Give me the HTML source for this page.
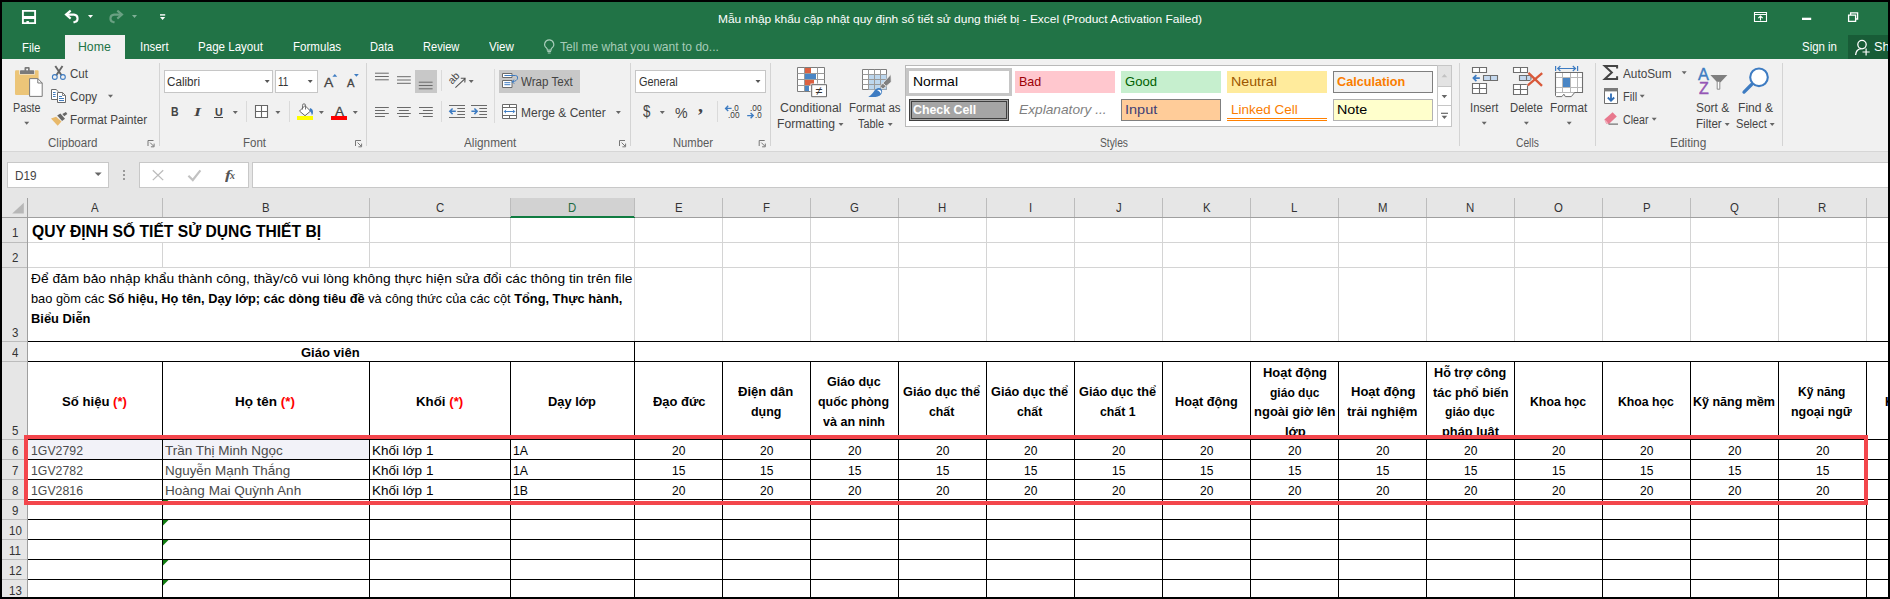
<!DOCTYPE html>
<html lang="vi"><head><meta charset="utf-8"><title>Excel</title><style>
html,body{margin:0;padding:0;background:#000;overflow:hidden}
#app{position:relative;width:1890px;height:599px;overflow:hidden;background:#000;font-family:"Liberation Sans",sans-serif}
.b{position:absolute}
.t{position:absolute;white-space:nowrap;line-height:1;transform-origin:0 0}
.rd{color:#f00}
#icons{position:absolute;left:0;top:0;pointer-events:none}
</style></head><body>
<div id="app">
<div class="b" style="left:2.00px;top:2.00px;width:1886.00px;height:595.00px;background:#fff;"></div>
<div id="titlebar" class="b" style="left:2px;top:2px;width:1886px;height:57px;background:#217346"></div>
<div class="b" style="left:65.00px;top:35.00px;width:60.00px;height:25.00px;background:#f1f1f1;"></div>
<div class="b" style="left:1848.00px;top:35.00px;width:40.00px;height:23.50px;background:#185c37;"></div>
<div class="b" style="left:2.00px;top:59.00px;width:1886.00px;height:92.00px;background:#f1f1f1;"></div>
<div class="b" style="left:2.00px;top:151.00px;width:1886.00px;height:1.00px;background:#d6d6d6;"></div>
<div class="b" style="left:2.00px;top:152.00px;width:1886.00px;height:46.00px;background:#e6e6e6;"></div>
<span class="t" style="left:718.30px;top:14px;font-size:11.80px;color:#fff;transform:scaleX(1.0139);">Mẫu nhập khẩu cập nhật quy định số tiết sử dụng thiết bị - Excel (Product Activation Failed)</span>
<span class="t" style="left:22.00px;top:42px;font-size:12.70px;color:#fff;transform:scaleX(0.8942);">File</span>
<span class="t" style="left:78.20px;top:41px;font-size:12.70px;color:#217346;transform:scaleX(0.9682);">Home</span>
<span class="t" style="left:140.20px;top:41px;font-size:12.70px;color:#fff;transform:scaleX(0.9004);">Insert</span>
<span class="t" style="left:198.00px;top:41px;font-size:12.70px;color:#fff;transform:scaleX(0.9114);">Page Layout</span>
<span class="t" style="left:292.60px;top:41px;font-size:12.70px;color:#fff;transform:scaleX(0.9106);">Formulas</span>
<span class="t" style="left:370.30px;top:41px;font-size:12.70px;color:#fff;transform:scaleX(0.8723);">Data</span>
<span class="t" style="left:423.30px;top:41px;font-size:12.70px;color:#fff;transform:scaleX(0.8741);">Review</span>
<span class="t" style="left:488.70px;top:41px;font-size:12.70px;color:#fff;transform:scaleX(0.9158);">View</span>
<span class="t" style="left:560.00px;top:41px;font-size:12.70px;color:#a6ccb8;transform:scaleX(0.9504);">Tell me what you want to do...</span>
<span class="t" style="left:1801.70px;top:41px;font-size:12.70px;color:#fff;transform:scaleX(0.9013);">Sign in</span>
<span class="t" style="left:1874.00px;top:41px;font-size:12.70px;color:#fff;">Share</span>
<span class="t" style="left:13.30px;top:102px;font-size:12.30px;color:#444444;transform:scaleX(0.8743);">Paste</span>
<span class="t" style="left:70.30px;top:68px;font-size:12.30px;color:#444444;transform:scaleX(0.9404);">Cut</span>
<span class="t" style="left:70.30px;top:91px;font-size:12.30px;color:#444444;transform:scaleX(0.9472);">Copy</span>
<span class="t" style="left:70.30px;top:114px;font-size:12.30px;color:#444444;transform:scaleX(0.9490);">Format Painter</span>
<span class="t" style="left:47.50px;top:137px;font-size:12.30px;color:#5a5a5a;transform:scaleX(0.9402);">Clipboard</span>
<div class="b" style="left:159.00px;top:63.00px;width:1.00px;height:83.00px;background:#d4d4d4;"></div>
<div class="b" style="left:164.00px;top:70.30px;width:109.30px;height:22.30px;background:#fff;border:1px solid #c6c6c6;box-sizing:border-box;"></div>
<div class="b" style="left:274.50px;top:70.30px;width:43.20px;height:22.30px;background:#fff;border:1px solid #c6c6c6;box-sizing:border-box;"></div>
<span class="t" style="left:167.40px;top:76px;font-size:12.30px;color:#333;transform:scaleX(0.9495);">Calibri</span>
<span class="t" style="left:278.00px;top:76px;font-size:12.30px;color:#333;transform:scaleX(0.8066);">11</span>
<span class="t" style="left:324.20px;top:76px;font-size:13.50px;color:#444444;transform:scaleX(1.0328);-webkit-text-stroke:0.3px #444;">A</span>
<span class="t" style="left:347.20px;top:78px;font-size:10.80px;color:#444444;transform:scaleX(1.0411);-webkit-text-stroke:0.3px #444;">A</span>
<span class="t" style="left:170.50px;top:106px;font-size:12.20px;color:#444444;font-weight:bold;transform:scaleX(0.8626);">B</span>
<span class="t" style="left:194.00px;top:106px;font-size:12.50px;color:#444444;font-style:italic;transform:scaleX(1.4398);font-family:'Liberation Serif',serif;font-weight:bold;">I</span>
<span class="t" style="left:214.60px;top:107px;font-size:11.80px;color:#444444;font-weight:bold;transform:scaleX(0.9036);">U</span>
<div class="b" style="left:214.00px;top:117.00px;width:9.00px;height:1.00px;background:#444444;"></div>
<div class="b" style="left:245.70px;top:101.30px;width:1.00px;height:21.20px;background:#dadada;"></div>
<div class="b" style="left:288.70px;top:101.30px;width:1.00px;height:21.20px;background:#dadada;"></div>
<div class="b" style="left:297.00px;top:116.00px;width:16.00px;height:4.00px;background:#ffff00;"></div>
<span class="t" style="left:335.00px;top:105px;font-size:13.70px;color:#444444;transform:scaleX(0.9849);-webkit-text-stroke:0.3px #444;">A</span>
<div class="b" style="left:331.00px;top:116.00px;width:16.00px;height:4.00px;background:#f00;"></div>
<span class="t" style="left:243.00px;top:137px;font-size:12.30px;color:#5a5a5a;transform:scaleX(0.9345);">Font</span>
<div class="b" style="left:366.00px;top:63.00px;width:1.00px;height:83.00px;background:#d4d4d4;"></div>
<div class="b" style="left:415.00px;top:70.00px;width:22.00px;height:23.00px;background:#c8c8c8;"></div>
<div class="b" style="left:440.80px;top:70.00px;width:1.00px;height:21.00px;background:#dadada;"></div>
<div class="b" style="left:493.50px;top:69.00px;width:1.00px;height:54.00px;background:#dadada;"></div>
<div class="b" style="left:499.00px;top:70.00px;width:81.00px;height:23.00px;background:#c8c8c8;"></div>
<span class="t" style="left:520.80px;top:76px;font-size:12.30px;color:#444444;transform:scaleX(0.9414);">Wrap Text</span>
<div class="b" style="left:440.80px;top:101.30px;width:1.00px;height:21.20px;background:#dadada;"></div>
<span class="t" style="left:520.80px;top:107px;font-size:12.30px;color:#444444;transform:scaleX(0.9755);">Merge &amp; Center</span>
<span class="t" style="left:464.00px;top:137px;font-size:12.30px;color:#5a5a5a;transform:scaleX(0.9562);">Alignment</span>
<div class="b" style="left:630.00px;top:63.00px;width:1.00px;height:83.00px;background:#d4d4d4;"></div>
<div class="b" style="left:635.30px;top:70.30px;width:130.30px;height:22.30px;background:#fff;border:1px solid #c6c6c6;box-sizing:border-box;"></div>
<span class="t" style="left:638.70px;top:76px;font-size:12.30px;color:#333;transform:scaleX(0.8867);">General</span>
<span class="t" style="left:642.70px;top:104px;font-size:15.80px;color:#444444;transform:scaleX(0.8421);">$</span>
<span class="t" style="left:674.50px;top:105px;font-size:15.00px;color:#444444;transform:scaleX(0.9447);">%</span>
<span class="t" style="left:698.40px;top:97px;font-size:18.00px;color:#444444;font-weight:bold;transform:scaleX(1.1199);font-family:'Liberation Serif',serif;">,</span>
<div class="b" style="left:717.00px;top:101.30px;width:1.00px;height:21.20px;background:#dadada;"></div>
<span class="t" style="left:732.30px;top:104px;font-size:8.80px;color:#3a3a3a;transform:scaleX(0.9129);">.0</span>
<span class="t" style="left:727.50px;top:111px;font-size:8.80px;color:#3a3a3a;transform:scaleX(0.9401);">.00</span>
<span class="t" style="left:749.70px;top:104px;font-size:8.80px;color:#3a3a3a;transform:scaleX(0.9401);">.00</span>
<span class="t" style="left:754.50px;top:111px;font-size:8.80px;color:#3a3a3a;transform:scaleX(0.9129);">.0</span>
<span class="t" style="left:672.50px;top:137px;font-size:12.30px;color:#5a5a5a;transform:scaleX(0.9143);">Number</span>
<div class="b" style="left:769.80px;top:63.00px;width:1.00px;height:83.00px;background:#d4d4d4;"></div>
<span class="t" style="left:780.00px;top:102px;font-size:12.30px;color:#444444;">Conditional</span>
<span class="t" style="left:777.00px;top:118px;font-size:12.30px;color:#444444;transform:scaleX(0.9866);">Formatting</span>
<span class="t" style="left:849.00px;top:102px;font-size:12.30px;color:#444444;transform:scaleX(0.9302);">Format as</span>
<span class="t" style="left:858.00px;top:118px;font-size:12.30px;color:#444444;transform:scaleX(0.8842);">Table</span>
<div class="b" style="left:905.00px;top:65.00px;width:533.00px;height:62.00px;background:#fff;border:1px solid #b9b9b9;box-sizing:border-box;"></div>
<div class="b" style="left:906.00px;top:68.00px;width:105.50px;height:27.50px;background:#c6c6c6;"></div>
<div class="b" style="left:908.70px;top:71.00px;width:100.30px;height:22.00px;background:#fff;"></div>
<span class="t" style="left:913.30px;top:75px;font-size:13.30px;color:#000;transform:scaleX(1.0498);">Normal</span>
<div class="b" style="left:1015.00px;top:71.00px;width:99.50px;height:22.00px;background:#ffc7ce;"></div>
<span class="t" style="left:1019.00px;top:75px;font-size:13.30px;color:#9c0006;transform:scaleX(0.9423);">Bad</span>
<div class="b" style="left:1120.80px;top:71.00px;width:100.00px;height:22.00px;background:#c6efce;"></div>
<span class="t" style="left:1125.00px;top:75px;font-size:13.30px;color:#006100;transform:scaleX(0.9835);">Good</span>
<div class="b" style="left:1227.00px;top:71.00px;width:99.70px;height:22.00px;background:#ffeb9c;"></div>
<span class="t" style="left:1231.30px;top:75px;font-size:13.30px;color:#9c5700;transform:scaleX(1.0705);">Neutral</span>
<div class="b" style="left:1333.00px;top:71.00px;width:100.00px;height:22.00px;background:#f2f2f2;border:1px solid #7f7f7f;box-sizing:border-box;"></div>
<span class="t" style="left:1336.80px;top:75px;font-size:13.30px;color:#fa7d00;font-weight:bold;transform:scaleX(0.9514);">Calculation</span>
<div class="b" style="left:909.00px;top:99.00px;width:99.70px;height:21.50px;background:#a5a5a5;border:3px double #3f3f3f;box-sizing:border-box;"></div>
<span class="t" style="left:913.30px;top:103px;font-size:13.30px;color:#fff;font-weight:bold;transform:scaleX(0.9293);">Check Cell</span>
<span class="t" style="left:1019.00px;top:103px;font-size:13.30px;color:#7f7f7f;font-style:italic;transform:scaleX(1.0316);">Explanatory ...</span>
<div class="b" style="left:1120.80px;top:99.00px;width:100.00px;height:21.50px;background:#ffcc99;border:1px solid #7f7f7f;box-sizing:border-box;"></div>
<span class="t" style="left:1125.00px;top:103px;font-size:13.30px;color:#3f3f76;transform:scaleX(1.0919);">Input</span>
<span class="t" style="left:1231.30px;top:103px;font-size:13.30px;color:#fa7d00;transform:scaleX(1.0137);">Linked Cell</span>
<div class="b" style="left:1227.00px;top:118.00px;width:99.70px;height:2.60px;border-top:1px solid #ff8001;border-bottom:1px solid #ff8001;box-sizing:border-box;"></div>
<div class="b" style="left:1333.00px;top:99.00px;width:100.00px;height:21.50px;background:#ffffcc;border:1px solid #b2b2b2;box-sizing:border-box;"></div>
<span class="t" style="left:1336.80px;top:103px;font-size:13.30px;color:#000;transform:scaleX(1.0750);">Note</span>
<div class="b" style="left:1437.00px;top:65.00px;width:14.50px;height:21.50px;background:#e3e3e3;border:1px solid #c6c6c6;box-sizing:border-box;"></div>
<div class="b" style="left:1437.00px;top:86.50px;width:14.50px;height:19.50px;background:#fff;border:1px solid #c6c6c6;box-sizing:border-box;border-top:none;"></div>
<div class="b" style="left:1437.00px;top:106.00px;width:14.50px;height:21.00px;background:#fff;border:1px solid #c6c6c6;box-sizing:border-box;border-top:none;"></div>
<span class="t" style="left:1100.00px;top:137px;font-size:12.30px;color:#5a5a5a;transform:scaleX(0.8359);">Styles</span>
<div class="b" style="left:1458.70px;top:63.00px;width:1.00px;height:83.00px;background:#d4d4d4;"></div>
<span class="t" style="left:1470.00px;top:102px;font-size:12.30px;color:#444444;transform:scaleX(0.9200);">Insert</span>
<span class="t" style="left:1510.30px;top:102px;font-size:12.30px;color:#444444;transform:scaleX(0.9197);">Delete</span>
<span class="t" style="left:1550.30px;top:102px;font-size:12.30px;color:#444444;transform:scaleX(0.9549);">Format</span>
<span class="t" style="left:1515.50px;top:137px;font-size:12.30px;color:#5a5a5a;transform:scaleX(0.8340);">Cells</span>
<div class="b" style="left:1595.00px;top:63.00px;width:1.00px;height:83.00px;background:#d4d4d4;"></div>
<span class="t" style="left:1622.50px;top:68px;font-size:12.30px;color:#444444;transform:scaleX(0.9586);">AutoSum</span>
<span class="t" style="left:1622.50px;top:91px;font-size:12.30px;color:#444444;transform:scaleX(0.9038);">Fill</span>
<span class="t" style="left:1622.50px;top:114px;font-size:12.30px;color:#444444;transform:scaleX(0.8675);">Clear</span>
<span class="t" style="left:1698.20px;top:66px;font-size:16.50px;color:#3e7cc2;transform:scaleX(0.9904);-webkit-text-stroke:0.4px #3e7cc2;">A</span>
<span class="t" style="left:1698.90px;top:80px;font-size:16.30px;color:#9556b5;transform:scaleX(0.9842);-webkit-text-stroke:0.4px #9556b5;">Z</span>
<span class="t" style="left:1695.80px;top:102px;font-size:12.30px;color:#444444;transform:scaleX(0.9713);">Sort &amp;</span>
<span class="t" style="left:1696.00px;top:118px;font-size:12.30px;color:#444444;transform:scaleX(0.9402);">Filter</span>
<span class="t" style="left:1738.00px;top:102px;font-size:12.30px;color:#444444;transform:scaleX(0.9845);">Find &amp;</span>
<span class="t" style="left:1735.80px;top:118px;font-size:12.30px;color:#444444;transform:scaleX(0.9039);">Select</span>
<span class="t" style="left:1670.00px;top:137px;font-size:12.30px;color:#5a5a5a;transform:scaleX(0.9652);">Editing</span>
<div class="b" style="left:1781.50px;top:63.00px;width:1.00px;height:83.00px;background:#d4d4d4;"></div>
<div class="b" style="left:7.00px;top:162.00px;width:102.00px;height:26.00px;background:#fff;border:1px solid #c8c8c8;box-sizing:border-box;"></div>
<span class="t" style="left:14.70px;top:170px;font-size:12.30px;color:#444;transform:scaleX(0.9572);">D19</span>
<div class="b" style="left:139.00px;top:162.00px;width:110.00px;height:26.00px;background:#fff;border:1px solid #c8c8c8;box-sizing:border-box;"></div>
<span class="t" style="left:225.00px;top:168px;font-size:13.50px;color:#555;font-weight:bold;font-style:italic;transform:scaleX(1.3345);font-family:'Liberation Serif',serif;">f</span>
<span class="t" style="left:230.30px;top:172px;font-size:9.50px;color:#555;font-weight:bold;font-style:italic;transform:scaleX(1.0410);font-family:'Liberation Serif',serif;">x</span>
<div class="b" style="left:252.00px;top:162.00px;width:1640.00px;height:26.00px;background:#fff;border:1px solid #c8c8c8;box-sizing:border-box;"></div>
<div class="b" style="left:2.00px;top:198.00px;width:1886.00px;height:19.00px;background:#e6e6e6;"></div>
<div class="b" style="left:2.00px;top:217.00px;width:25.00px;height:380.00px;background:#e6e6e6;"></div>
<div class="b" style="left:28.00px;top:218.00px;width:1860.00px;height:379.00px;background:#fff;"></div>
<div class="b" style="left:510.00px;top:198.00px;width:125.00px;height:18.00px;background:#d2d2d2;"></div>
<div class="b" style="left:510.00px;top:216.00px;width:125.00px;height:2.00px;background:#107c41;"></div>
<div class="b" style="left:2.00px;top:217.00px;width:508.00px;height:1.00px;background:#9f9f9f;"></div>
<div class="b" style="left:635.00px;top:217.00px;width:1253.00px;height:1.00px;background:#9f9f9f;"></div>
<div class="b" style="left:27.00px;top:198.00px;width:1.00px;height:19.00px;background:#9f9f9f;"></div>
<div class="b" style="left:162.00px;top:198.00px;width:1.00px;height:19.00px;background:#bcbcbc;"></div>
<div class="b" style="left:369.00px;top:198.00px;width:1.00px;height:19.00px;background:#bcbcbc;"></div>
<div class="b" style="left:510.00px;top:198.00px;width:1.00px;height:19.00px;background:#bcbcbc;"></div>
<div class="b" style="left:634.00px;top:198.00px;width:1.00px;height:19.00px;background:#bcbcbc;"></div>
<div class="b" style="left:722.00px;top:198.00px;width:1.00px;height:19.00px;background:#bcbcbc;"></div>
<div class="b" style="left:810.00px;top:198.00px;width:1.00px;height:19.00px;background:#bcbcbc;"></div>
<div class="b" style="left:898.00px;top:198.00px;width:1.00px;height:19.00px;background:#bcbcbc;"></div>
<div class="b" style="left:986.00px;top:198.00px;width:1.00px;height:19.00px;background:#bcbcbc;"></div>
<div class="b" style="left:1074.00px;top:198.00px;width:1.00px;height:19.00px;background:#bcbcbc;"></div>
<div class="b" style="left:1162.00px;top:198.00px;width:1.00px;height:19.00px;background:#bcbcbc;"></div>
<div class="b" style="left:1250.00px;top:198.00px;width:1.00px;height:19.00px;background:#bcbcbc;"></div>
<div class="b" style="left:1338.00px;top:198.00px;width:1.00px;height:19.00px;background:#bcbcbc;"></div>
<div class="b" style="left:1426.00px;top:198.00px;width:1.00px;height:19.00px;background:#bcbcbc;"></div>
<div class="b" style="left:1514.00px;top:198.00px;width:1.00px;height:19.00px;background:#bcbcbc;"></div>
<div class="b" style="left:1602.00px;top:198.00px;width:1.00px;height:19.00px;background:#bcbcbc;"></div>
<div class="b" style="left:1690.00px;top:198.00px;width:1.00px;height:19.00px;background:#bcbcbc;"></div>
<div class="b" style="left:1778.00px;top:198.00px;width:1.00px;height:19.00px;background:#bcbcbc;"></div>
<div class="b" style="left:1866.00px;top:198.00px;width:1.00px;height:19.00px;background:#bcbcbc;"></div>
<div class="b" style="left:27.00px;top:217.00px;width:1.00px;height:380.00px;background:#9f9f9f;"></div>
<span class="t" style="left:91.20px;top:202px;font-size:12.00px;color:#333;transform:scaleX(0.9500);">A</span>
<span class="t" style="left:262.20px;top:202px;font-size:12.00px;color:#333;transform:scaleX(0.9500);">B</span>
<span class="t" style="left:435.88px;top:202px;font-size:12.00px;color:#333;transform:scaleX(0.9500);">C</span>
<span class="t" style="left:568.38px;top:202px;font-size:12.00px;color:#1e6b41;transform:scaleX(0.9500);">D</span>
<span class="t" style="left:674.70px;top:202px;font-size:12.00px;color:#333;transform:scaleX(0.9500);">E</span>
<span class="t" style="left:763.02px;top:202px;font-size:12.00px;color:#333;transform:scaleX(0.9500);">F</span>
<span class="t" style="left:850.07px;top:202px;font-size:12.00px;color:#333;transform:scaleX(0.9500);">G</span>
<span class="t" style="left:938.38px;top:202px;font-size:12.00px;color:#333;transform:scaleX(0.9500);">H</span>
<span class="t" style="left:1028.92px;top:202px;font-size:12.00px;color:#333;transform:scaleX(0.9500);">I</span>
<span class="t" style="left:1115.65px;top:202px;font-size:12.00px;color:#333;transform:scaleX(0.9500);">J</span>
<span class="t" style="left:1202.70px;top:202px;font-size:12.00px;color:#333;transform:scaleX(0.9500);">K</span>
<span class="t" style="left:1291.33px;top:202px;font-size:12.00px;color:#333;transform:scaleX(0.9500);">L</span>
<span class="t" style="left:1377.75px;top:202px;font-size:12.00px;color:#333;transform:scaleX(0.9500);">M</span>
<span class="t" style="left:1466.38px;top:202px;font-size:12.00px;color:#333;transform:scaleX(0.9500);">N</span>
<span class="t" style="left:1554.07px;top:202px;font-size:12.00px;color:#333;transform:scaleX(0.9500);">O</span>
<span class="t" style="left:1642.70px;top:202px;font-size:12.00px;color:#333;transform:scaleX(0.9500);">P</span>
<span class="t" style="left:1730.07px;top:202px;font-size:12.00px;color:#333;transform:scaleX(0.9500);">Q</span>
<span class="t" style="left:1818.38px;top:202px;font-size:12.00px;color:#333;transform:scaleX(0.9500);">R</span>
<span class="t" style="left:11.79px;top:227px;font-size:12.40px;color:#333;transform:scaleX(0.9300);">1</span>
<div class="b" style="left:2.00px;top:242.00px;width:25.00px;height:1.00px;background:#bcbcbc;"></div>
<span class="t" style="left:11.79px;top:252px;font-size:12.40px;color:#333;transform:scaleX(0.9300);">2</span>
<div class="b" style="left:2.00px;top:267.00px;width:25.00px;height:1.00px;background:#bcbcbc;"></div>
<span class="t" style="left:11.79px;top:327px;font-size:12.40px;color:#333;transform:scaleX(0.9300);">3</span>
<div class="b" style="left:2.00px;top:341.00px;width:25.00px;height:1.00px;background:#bcbcbc;"></div>
<span class="t" style="left:11.79px;top:347px;font-size:12.40px;color:#333;transform:scaleX(0.9300);">4</span>
<div class="b" style="left:2.00px;top:361.00px;width:25.00px;height:1.00px;background:#bcbcbc;"></div>
<span class="t" style="left:11.79px;top:425px;font-size:12.40px;color:#333;transform:scaleX(0.9300);">5</span>
<div class="b" style="left:2.00px;top:439.00px;width:25.00px;height:1.00px;background:#bcbcbc;"></div>
<span class="t" style="left:11.79px;top:445px;font-size:12.40px;color:#333;transform:scaleX(0.9300);">6</span>
<div class="b" style="left:2.00px;top:459.00px;width:25.00px;height:1.00px;background:#bcbcbc;"></div>
<span class="t" style="left:11.79px;top:465px;font-size:12.40px;color:#333;transform:scaleX(0.9300);">7</span>
<div class="b" style="left:2.00px;top:479.00px;width:25.00px;height:1.00px;background:#bcbcbc;"></div>
<span class="t" style="left:11.79px;top:485px;font-size:12.40px;color:#333;transform:scaleX(0.9300);">8</span>
<div class="b" style="left:2.00px;top:499.00px;width:25.00px;height:1.00px;background:#bcbcbc;"></div>
<span class="t" style="left:11.79px;top:505px;font-size:12.40px;color:#333;transform:scaleX(0.9300);">9</span>
<div class="b" style="left:2.00px;top:519.00px;width:25.00px;height:1.00px;background:#bcbcbc;"></div>
<span class="t" style="left:8.59px;top:525px;font-size:12.40px;color:#333;transform:scaleX(0.9300);">10</span>
<div class="b" style="left:2.00px;top:539.00px;width:25.00px;height:1.00px;background:#bcbcbc;"></div>
<span class="t" style="left:9.01px;top:545px;font-size:12.40px;color:#333;transform:scaleX(0.9300);">11</span>
<div class="b" style="left:2.00px;top:559.00px;width:25.00px;height:1.00px;background:#bcbcbc;"></div>
<span class="t" style="left:8.59px;top:565px;font-size:12.40px;color:#333;transform:scaleX(0.9300);">12</span>
<div class="b" style="left:2.00px;top:579.00px;width:25.00px;height:1.00px;background:#bcbcbc;"></div>
<span class="t" style="left:8.59px;top:585px;font-size:12.40px;color:#333;transform:scaleX(0.9300);">13</span>
<div class="b" style="left:2.00px;top:599.00px;width:25.00px;height:1.00px;background:#bcbcbc;"></div>
<div class="b" style="left:28.00px;top:242.00px;width:1860.00px;height:1.00px;background:#d4d4d4;"></div>
<div class="b" style="left:28.00px;top:267.00px;width:1860.00px;height:1.00px;background:#d4d4d4;"></div>
<div class="b" style="left:162.00px;top:243.00px;width:1.00px;height:24.00px;background:#d4d4d4;"></div>
<div class="b" style="left:369.00px;top:218.00px;width:1.00px;height:49.00px;background:#d4d4d4;"></div>
<div class="b" style="left:510.00px;top:218.00px;width:1.00px;height:49.00px;background:#d4d4d4;"></div>
<div class="b" style="left:634.00px;top:218.00px;width:1.00px;height:123.00px;background:#d4d4d4;"></div>
<div class="b" style="left:722.00px;top:218.00px;width:1.00px;height:123.00px;background:#d4d4d4;"></div>
<div class="b" style="left:810.00px;top:218.00px;width:1.00px;height:123.00px;background:#d4d4d4;"></div>
<div class="b" style="left:898.00px;top:218.00px;width:1.00px;height:123.00px;background:#d4d4d4;"></div>
<div class="b" style="left:986.00px;top:218.00px;width:1.00px;height:123.00px;background:#d4d4d4;"></div>
<div class="b" style="left:1074.00px;top:218.00px;width:1.00px;height:123.00px;background:#d4d4d4;"></div>
<div class="b" style="left:1162.00px;top:218.00px;width:1.00px;height:123.00px;background:#d4d4d4;"></div>
<div class="b" style="left:1250.00px;top:218.00px;width:1.00px;height:123.00px;background:#d4d4d4;"></div>
<div class="b" style="left:1338.00px;top:218.00px;width:1.00px;height:123.00px;background:#d4d4d4;"></div>
<div class="b" style="left:1426.00px;top:218.00px;width:1.00px;height:123.00px;background:#d4d4d4;"></div>
<div class="b" style="left:1514.00px;top:218.00px;width:1.00px;height:123.00px;background:#d4d4d4;"></div>
<div class="b" style="left:1602.00px;top:218.00px;width:1.00px;height:123.00px;background:#d4d4d4;"></div>
<div class="b" style="left:1690.00px;top:218.00px;width:1.00px;height:123.00px;background:#d4d4d4;"></div>
<div class="b" style="left:1778.00px;top:218.00px;width:1.00px;height:123.00px;background:#d4d4d4;"></div>
<div class="b" style="left:1866.00px;top:218.00px;width:1.00px;height:123.00px;background:#d4d4d4;"></div>
<div class="b" style="left:28.00px;top:341.00px;width:1860.00px;height:1.00px;background:#000;"></div>
<div class="b" style="left:28.00px;top:361.00px;width:1860.00px;height:1.00px;background:#000;"></div>
<div class="b" style="left:28.00px;top:439.00px;width:1860.00px;height:1.00px;background:#000;"></div>
<div class="b" style="left:28.00px;top:459.00px;width:1860.00px;height:1.00px;background:#000;"></div>
<div class="b" style="left:28.00px;top:479.00px;width:1860.00px;height:1.00px;background:#000;"></div>
<div class="b" style="left:28.00px;top:499.00px;width:1860.00px;height:1.00px;background:#000;"></div>
<div class="b" style="left:28.00px;top:519.00px;width:1860.00px;height:1.00px;background:#000;"></div>
<div class="b" style="left:28.00px;top:539.00px;width:1860.00px;height:1.00px;background:#000;"></div>
<div class="b" style="left:28.00px;top:559.00px;width:1860.00px;height:1.00px;background:#000;"></div>
<div class="b" style="left:28.00px;top:579.00px;width:1860.00px;height:1.00px;background:#000;"></div>
<div class="b" style="left:162.00px;top:361.00px;width:1.00px;height:236.00px;background:#000;"></div>
<div class="b" style="left:369.00px;top:361.00px;width:1.00px;height:236.00px;background:#000;"></div>
<div class="b" style="left:510.00px;top:361.00px;width:1.00px;height:236.00px;background:#000;"></div>
<div class="b" style="left:634.00px;top:341.00px;width:1.00px;height:256.00px;background:#000;"></div>
<div class="b" style="left:722.00px;top:361.00px;width:1.00px;height:236.00px;background:#000;"></div>
<div class="b" style="left:810.00px;top:361.00px;width:1.00px;height:236.00px;background:#000;"></div>
<div class="b" style="left:898.00px;top:361.00px;width:1.00px;height:236.00px;background:#000;"></div>
<div class="b" style="left:986.00px;top:361.00px;width:1.00px;height:236.00px;background:#000;"></div>
<div class="b" style="left:1074.00px;top:361.00px;width:1.00px;height:236.00px;background:#000;"></div>
<div class="b" style="left:1162.00px;top:361.00px;width:1.00px;height:236.00px;background:#000;"></div>
<div class="b" style="left:1250.00px;top:361.00px;width:1.00px;height:236.00px;background:#000;"></div>
<div class="b" style="left:1338.00px;top:361.00px;width:1.00px;height:236.00px;background:#000;"></div>
<div class="b" style="left:1426.00px;top:361.00px;width:1.00px;height:236.00px;background:#000;"></div>
<div class="b" style="left:1514.00px;top:361.00px;width:1.00px;height:236.00px;background:#000;"></div>
<div class="b" style="left:1602.00px;top:361.00px;width:1.00px;height:236.00px;background:#000;"></div>
<div class="b" style="left:1690.00px;top:361.00px;width:1.00px;height:236.00px;background:#000;"></div>
<div class="b" style="left:1778.00px;top:361.00px;width:1.00px;height:236.00px;background:#000;"></div>
<div class="b" style="left:1866.00px;top:361.00px;width:1.00px;height:236.00px;background:#000;"></div>
<div class="b" style="left:28.00px;top:440.00px;width:134.00px;height:19.00px;background:#f2f2f8;"></div>
<div class="b" style="left:163.00px;top:440.00px;width:206.00px;height:19.00px;background:#f2f2f8;"></div>
<span class="t" style="left:31.70px;top:223px;font-size:17.20px;color:#000;font-weight:bold;transform:scaleX(0.9102);">QUY ĐỊNH SỐ TIẾT SỬ DỤNG THIẾT BỊ</span>
<span class="t" style="left:30.50px;top:272px;font-size:13.30px;color:#000;transform:scaleX(1.0349);">Để đảm bảo nhập khẩu thành công, thầy/cô vui lòng không thực hiện sửa đổi các thông tin trên file</span>
<span class="t" style="left:30.50px;top:292px;font-size:13.30px;color:#000;transform:scaleX(0.9632);">bao gồm các <b>Số hiệu, Họ tên, Dạy lớp; các dòng tiêu đề</b> và công thức của các cột <b>Tổng, Thực hành,</b></span>
<span class="t" style="left:30.50px;top:312px;font-size:13.30px;color:#000;transform:scaleX(0.9700);"><b>Biểu Diễn</b></span>
<span class="t" style="left:301.40px;top:346px;font-size:13.30px;color:#000;font-weight:bold;transform:scaleX(0.9788);">Giáo viên</span>
<span class="t" style="left:62.00px;top:395px;font-size:13.30px;color:#000;font-weight:bold;transform:scaleX(0.9884);">Số hiệu <span class="rd">(*)</span></span>
<span class="t" style="left:235.00px;top:395px;font-size:13.30px;color:#000;font-weight:bold;transform:scaleX(1.0151);">Họ tên <span class="rd">(*)</span></span>
<span class="t" style="left:416.00px;top:395px;font-size:13.30px;color:#000;font-weight:bold;">Khối <span class="rd">(*)</span></span>
<span class="t" style="left:547.80px;top:395px;font-size:13.30px;color:#000;font-weight:bold;transform:scaleX(0.9682);">Dạy lớp</span>
<div class="b" style="left:635px;top:362px;width:87px;height:73px;overflow:hidden">
<span class="t" style="left:17.50px;top:33px;font-size:13.30px;color:#000;font-weight:bold;transform:scaleX(0.9727)">Đạo đức</span>
</div>
<div class="b" style="left:723px;top:362px;width:87px;height:73px;overflow:hidden">
<span class="t" style="left:15.00px;top:23px;font-size:13.30px;color:#000;font-weight:bold;transform:scaleX(0.9846)">Điện dân</span>
<span class="t" style="left:28.30px;top:43px;font-size:13.30px;color:#000;font-weight:bold;transform:scaleX(0.9355)">dụng</span>
</div>
<div class="b" style="left:811px;top:362px;width:87px;height:73px;overflow:hidden">
<span class="t" style="left:16.00px;top:13px;font-size:13.30px;color:#000;font-weight:bold;transform:scaleX(0.9455)">Giáo dục</span>
<span class="t" style="left:7.00px;top:33px;font-size:13.30px;color:#000;font-weight:bold;transform:scaleX(0.9331)">quốc phòng</span>
<span class="t" style="left:12.00px;top:53px;font-size:13.30px;color:#000;font-weight:bold;transform:scaleX(0.9426)">và an ninh</span>
</div>
<div class="b" style="left:899px;top:362px;width:87px;height:73px;overflow:hidden">
<span class="t" style="left:4.20px;top:23px;font-size:13.30px;color:#000;font-weight:bold;transform:scaleX(0.9560)">Giáo dục thể</span>
<span class="t" style="left:30.00px;top:43px;font-size:13.30px;color:#000;font-weight:bold;transform:scaleX(0.9251)">chất</span>
</div>
<div class="b" style="left:987px;top:362px;width:87px;height:73px;overflow:hidden">
<span class="t" style="left:4.20px;top:23px;font-size:13.30px;color:#000;font-weight:bold;transform:scaleX(0.9560)">Giáo dục thể</span>
<span class="t" style="left:30.00px;top:43px;font-size:13.30px;color:#000;font-weight:bold;transform:scaleX(0.9251)">chất</span>
</div>
<div class="b" style="left:1075px;top:362px;width:87px;height:73px;overflow:hidden">
<span class="t" style="left:4.20px;top:23px;font-size:13.30px;color:#000;font-weight:bold;transform:scaleX(0.9560)">Giáo dục thể</span>
<span class="t" style="left:25.00px;top:43px;font-size:13.30px;color:#000;font-weight:bold;transform:scaleX(0.9235)">chất 1</span>
</div>
<div class="b" style="left:1163px;top:362px;width:87px;height:73px;overflow:hidden">
<span class="t" style="left:11.80px;top:33px;font-size:13.30px;color:#000;font-weight:bold;transform:scaleX(0.9536)">Hoạt động</span>
</div>
<div class="b" style="left:1251px;top:362px;width:87px;height:73px;overflow:hidden">
<span class="t" style="left:12.00px;top:4px;font-size:13.30px;color:#000;font-weight:bold;transform:scaleX(0.9734)">Hoạt động</span>
<span class="t" style="left:18.50px;top:24px;font-size:13.30px;color:#000;font-weight:bold;transform:scaleX(0.9052)">giáo dục</span>
<span class="t" style="left:2.50px;top:43px;font-size:13.30px;color:#000;font-weight:bold;transform:scaleX(0.9778)">ngoài giờ lên</span>
<span class="t" style="left:33.60px;top:63px;font-size:13.30px;color:#000;font-weight:bold;transform:scaleX(0.9777)">lớp</span>
</div>
<div class="b" style="left:1339px;top:362px;width:87px;height:73px;overflow:hidden">
<span class="t" style="left:11.80px;top:23px;font-size:13.30px;color:#000;font-weight:bold;transform:scaleX(0.9795)">Hoạt động</span>
<span class="t" style="left:8.30px;top:43px;font-size:13.30px;color:#000;font-weight:bold;transform:scaleX(0.9835)">trải nghiệm</span>
</div>
<div class="b" style="left:1427px;top:362px;width:87px;height:73px;overflow:hidden">
<span class="t" style="left:6.80px;top:4px;font-size:13.30px;color:#000;font-weight:bold;transform:scaleX(0.9506)">Hỗ trợ công</span>
<span class="t" style="left:5.50px;top:24px;font-size:13.30px;color:#000;font-weight:bold;transform:scaleX(0.9639)">tác phổ biến</span>
<span class="t" style="left:17.60px;top:43px;font-size:13.30px;color:#000;font-weight:bold;transform:scaleX(0.9089)">giáo dục</span>
<span class="t" style="left:14.60px;top:63px;font-size:13.30px;color:#000;font-weight:bold;transform:scaleX(0.9643)">pháp luật</span>
</div>
<div class="b" style="left:1515px;top:362px;width:87px;height:73px;overflow:hidden">
<span class="t" style="left:15.00px;top:33px;font-size:13.30px;color:#000;font-weight:bold;transform:scaleX(0.9242)">Khoa học</span>
</div>
<div class="b" style="left:1603px;top:362px;width:87px;height:73px;overflow:hidden">
<span class="t" style="left:15.30px;top:33px;font-size:13.30px;color:#000;font-weight:bold;transform:scaleX(0.9226)">Khoa học</span>
</div>
<div class="b" style="left:1691px;top:362px;width:87px;height:73px;overflow:hidden">
<span class="t" style="left:2.00px;top:33px;font-size:13.30px;color:#000;font-weight:bold;transform:scaleX(0.9403)">Kỹ năng mềm</span>
</div>
<div class="b" style="left:1779px;top:362px;width:87px;height:73px;overflow:hidden">
<span class="t" style="left:19.00px;top:23px;font-size:13.30px;color:#000;font-weight:bold;transform:scaleX(0.9015)">Kỹ năng</span>
<span class="t" style="left:11.80px;top:43px;font-size:13.30px;color:#000;font-weight:bold;transform:scaleX(0.9363)">ngoại ngữ</span>
</div>
<span class="t" style="left:1885.00px;top:395px;font-size:13.30px;color:#000;font-weight:bold;transform:scaleX(0.9370);">K</span>
<span class="t" style="left:30.50px;top:444px;font-size:13.30px;color:#4a4a4a;transform:scaleX(0.9252);">1GV2792</span>
<span class="t" style="left:165.00px;top:444px;font-size:13.30px;color:#4a4a4a;transform:scaleX(1.0150);">Trần Thị Minh Ngọc</span>
<span class="t" style="left:372.30px;top:444px;font-size:13.30px;color:#000;transform:scaleX(1.0152);">Khối lớp 1</span>
<span class="t" style="left:513.00px;top:444px;font-size:13.30px;color:#000;transform:scaleX(0.9220);">1A</span>
<span class="t" style="left:671.80px;top:444px;font-size:13.30px;color:#000;transform:scaleX(0.9058);">20</span>
<span class="t" style="left:759.80px;top:444px;font-size:13.30px;color:#000;transform:scaleX(0.9058);">20</span>
<span class="t" style="left:847.80px;top:444px;font-size:13.30px;color:#000;transform:scaleX(0.9058);">20</span>
<span class="t" style="left:935.80px;top:444px;font-size:13.30px;color:#000;transform:scaleX(0.9058);">20</span>
<span class="t" style="left:1023.80px;top:444px;font-size:13.30px;color:#000;transform:scaleX(0.9058);">20</span>
<span class="t" style="left:1111.80px;top:444px;font-size:13.30px;color:#000;transform:scaleX(0.9058);">20</span>
<span class="t" style="left:1199.80px;top:444px;font-size:13.30px;color:#000;transform:scaleX(0.9058);">20</span>
<span class="t" style="left:1287.80px;top:444px;font-size:13.30px;color:#000;transform:scaleX(0.9058);">20</span>
<span class="t" style="left:1375.80px;top:444px;font-size:13.30px;color:#000;transform:scaleX(0.9058);">20</span>
<span class="t" style="left:1463.80px;top:444px;font-size:13.30px;color:#000;transform:scaleX(0.9058);">20</span>
<span class="t" style="left:1551.80px;top:444px;font-size:13.30px;color:#000;transform:scaleX(0.9058);">20</span>
<span class="t" style="left:1639.80px;top:444px;font-size:13.30px;color:#000;transform:scaleX(0.9058);">20</span>
<span class="t" style="left:1727.80px;top:444px;font-size:13.30px;color:#000;transform:scaleX(0.9058);">20</span>
<span class="t" style="left:1815.80px;top:444px;font-size:13.30px;color:#000;transform:scaleX(0.9058);">20</span>
<span class="t" style="left:30.50px;top:464px;font-size:13.30px;color:#4a4a4a;transform:scaleX(0.9252);">1GV2782</span>
<span class="t" style="left:165.00px;top:464px;font-size:13.30px;color:#4a4a4a;transform:scaleX(1.0107);">Nguyễn Mạnh Thắng</span>
<span class="t" style="left:372.30px;top:464px;font-size:13.30px;color:#000;transform:scaleX(1.0152);">Khối lớp 1</span>
<span class="t" style="left:513.00px;top:464px;font-size:13.30px;color:#000;transform:scaleX(0.9220);">1A</span>
<span class="t" style="left:671.80px;top:464px;font-size:13.30px;color:#000;transform:scaleX(0.9058);">15</span>
<span class="t" style="left:759.80px;top:464px;font-size:13.30px;color:#000;transform:scaleX(0.9058);">15</span>
<span class="t" style="left:847.80px;top:464px;font-size:13.30px;color:#000;transform:scaleX(0.9058);">15</span>
<span class="t" style="left:935.80px;top:464px;font-size:13.30px;color:#000;transform:scaleX(0.9058);">15</span>
<span class="t" style="left:1023.80px;top:464px;font-size:13.30px;color:#000;transform:scaleX(0.9058);">15</span>
<span class="t" style="left:1111.80px;top:464px;font-size:13.30px;color:#000;transform:scaleX(0.9058);">15</span>
<span class="t" style="left:1199.80px;top:464px;font-size:13.30px;color:#000;transform:scaleX(0.9058);">15</span>
<span class="t" style="left:1287.80px;top:464px;font-size:13.30px;color:#000;transform:scaleX(0.9058);">15</span>
<span class="t" style="left:1375.80px;top:464px;font-size:13.30px;color:#000;transform:scaleX(0.9058);">15</span>
<span class="t" style="left:1463.80px;top:464px;font-size:13.30px;color:#000;transform:scaleX(0.9058);">15</span>
<span class="t" style="left:1551.80px;top:464px;font-size:13.30px;color:#000;transform:scaleX(0.9058);">15</span>
<span class="t" style="left:1639.80px;top:464px;font-size:13.30px;color:#000;transform:scaleX(0.9058);">15</span>
<span class="t" style="left:1727.80px;top:464px;font-size:13.30px;color:#000;transform:scaleX(0.9058);">15</span>
<span class="t" style="left:1815.80px;top:464px;font-size:13.30px;color:#000;transform:scaleX(0.9058);">15</span>
<span class="t" style="left:30.50px;top:484px;font-size:13.30px;color:#4a4a4a;transform:scaleX(0.9252);">1GV2816</span>
<span class="t" style="left:165.00px;top:484px;font-size:13.30px;color:#4a4a4a;transform:scaleX(1.0177);">Hoàng Mai Quỳnh Anh</span>
<span class="t" style="left:372.30px;top:484px;font-size:13.30px;color:#000;transform:scaleX(1.0152);">Khối lớp 1</span>
<span class="t" style="left:513.00px;top:484px;font-size:13.30px;color:#000;transform:scaleX(0.9220);">1B</span>
<span class="t" style="left:671.80px;top:484px;font-size:13.30px;color:#000;transform:scaleX(0.9058);">20</span>
<span class="t" style="left:759.80px;top:484px;font-size:13.30px;color:#000;transform:scaleX(0.9058);">20</span>
<span class="t" style="left:847.80px;top:484px;font-size:13.30px;color:#000;transform:scaleX(0.9058);">20</span>
<span class="t" style="left:935.80px;top:484px;font-size:13.30px;color:#000;transform:scaleX(0.9058);">20</span>
<span class="t" style="left:1023.80px;top:484px;font-size:13.30px;color:#000;transform:scaleX(0.9058);">20</span>
<span class="t" style="left:1111.80px;top:484px;font-size:13.30px;color:#000;transform:scaleX(0.9058);">20</span>
<span class="t" style="left:1199.80px;top:484px;font-size:13.30px;color:#000;transform:scaleX(0.9058);">20</span>
<span class="t" style="left:1287.80px;top:484px;font-size:13.30px;color:#000;transform:scaleX(0.9058);">20</span>
<span class="t" style="left:1375.80px;top:484px;font-size:13.30px;color:#000;transform:scaleX(0.9058);">20</span>
<span class="t" style="left:1463.80px;top:484px;font-size:13.30px;color:#000;transform:scaleX(0.9058);">20</span>
<span class="t" style="left:1551.80px;top:484px;font-size:13.30px;color:#000;transform:scaleX(0.9058);">20</span>
<span class="t" style="left:1639.80px;top:484px;font-size:13.30px;color:#000;transform:scaleX(0.9058);">20</span>
<span class="t" style="left:1727.80px;top:484px;font-size:13.30px;color:#000;transform:scaleX(0.9058);">20</span>
<span class="t" style="left:1815.80px;top:484px;font-size:13.30px;color:#000;transform:scaleX(0.9058);">20</span>
<svg id="icons" width="1890" height="599" viewBox="0 0 1890 599"><path d="M22.900 10.900h12.200v12.200h-12.200z" fill="none" stroke="#fff" stroke-width="1.900"/><path d="M23 16h12v3h-12z" fill="#fff"/><path d="M26.400 21h2.500v2.800h-2.500z" fill="#fff"/><path d="M66.400 14.600h7.600a3.800 3.800 0 0 1 .6 7.500l-1.200.2" fill="none" stroke="#fff" stroke-width="2.100"/><path d="M70.700 10.600l-4.700 4 4.700 4" fill="none" stroke="#fff" stroke-width="2.100"/><path d="M88.00 15.00h5.00l-2.50 3.00z" fill="#fff"/><g opacity="0.330"><path d="M121.600 14.600h-7.600a3.800 3.800 0 0 0-.6 7.500l1.200.2" fill="none" stroke="#fff" stroke-width="2.100"/><path d="M117.300 10.600l4.700 4-4.700 4" fill="none" stroke="#fff" stroke-width="2.100"/></g><path d="M132.00 15.00h5.00l-2.50 3.00z" fill="#7fb197"/><path d="M160 14.2h5.2v1.4h-5.2z" fill="#fff"/><path d="M160.00 16.90h5.20l-2.60 3.00z" fill="#fff"/><path d="M1754.500 12.500h12v9h-12z" fill="none" stroke="#fff" stroke-width="1.100"/><path d="M1754.500 14.500h12" stroke="#fff" stroke-width="1"/><path d="M1760.500 20.500v-4M1758.300 18.200l2.200-2.200 2.200 2.200" fill="none" stroke="#fff" stroke-width="1.100"/><path d="M1802 17.700h9.200v2.300h-9.200z" fill="#fff"/><path d="M1848.600 15.200h7v6.200h-7z" fill="none" stroke="#fff" stroke-width="1.300"/><path d="M1850.600 15v-2.200h7v6.200h-2" fill="none" stroke="#fff" stroke-width="1.300"/><path d="M549.200 39.900a4.500 4.500 0 0 1 2.600 8.200c-.6.600-.8 1.200-.8 2.100h-3.600c0-.9-.2-1.500-.8-2.100a4.500 4.500 0 0 1 2.600-8.200z" fill="none" stroke="#a6ccb8" stroke-width="1.200"/><path d="M547.300 51.500h3.800M547.800 53h2.800" stroke="#a6ccb8" stroke-width="1"/><circle cx="1862" cy="44.600" r="4.200" fill="none" stroke="#fff" stroke-width="1.300"/><path d="M1855.600 55c.3-3.800 2.400-6 5.600-6.400" fill="none" stroke="#fff" stroke-width="1.300"/><path d="M1862.500 52h7.200M1866.100 48.400v7.200" stroke="#fff" stroke-width="1.200"/><rect x="15" y="70.3" width="23.6" height="24.6" rx="1.2" fill="#ecc578"/><path d="M19.300 69.300h15.600v5.200h-15.600z" fill="#f1f1f1"/><path d="M20 73.900v-2.900a.8.8 0 0 1 .8-.8h3.700v-2.200a1 1 0 0 1 1-1h3.200a1 1 0 0 1 1 1v2.200h3.700a.8.8 0 0 1 .8.800v2.900z" fill="#7a7a7a"/><circle cx="27.100" cy="69.600" r="1" fill="#f7f7f7"/><path d="M29.6 78.6h8.2l4.4 4.4v13.4h-12.6z" fill="#fff" stroke="#7a7a7a" stroke-width="1"/><path d="M37.8 78.6v4.4h4.4" fill="none" stroke="#7a7a7a" stroke-width="1"/><path d="M24.20 121.70h5.00l-2.50 3.00z" fill="#666"/><path d="M55.300 65.900l6.200 9.400M62.500 65.900l-6.200 9.400" stroke="#666" stroke-width="1.900" fill="none"/><circle cx="54.800" cy="77" r="2.400" fill="none" stroke="#3e7cc2" stroke-width="1.100"/><circle cx="62.900" cy="77" r="2.400" fill="none" stroke="#3e7cc2" stroke-width="1.100"/><path d="M51.5 89.5h4.6l2.4 2.4v7.6h-7z" fill="#fff" stroke="#6a6a6a" stroke-width="1"/><path d="M57.5 92.5h5l3 3v7h-8z" fill="#fff" stroke="#6a6a6a" stroke-width="1"/><path d="M62.5 92.5v3h3" fill="none" stroke="#6a6a6a" stroke-width="0.8"/><path d="M53 92.5h2.600M53 94.500h2.600M53 96.500h2.600M59 96.500h3M59 98.500h5M59 100.500h5" stroke="#2f6db5" stroke-width="0.900"/><path d="M108.00 94.80h5.00l-2.50 3.00z" fill="#666"/><path d="M51 118.400l5.100-1.700 5.400 4.800-3.800 4.300z" fill="#e8b96a"/><path d="M57.200 115.600l3.200-2.100 4.600 5.200-2.900 2.300z" fill="#666"/><path d="M62.300 114l3.600-2.100 1.400 2-3 2.300z" fill="#666"/><path d="M148.0 146.0v-5.5h5.5" fill="none" stroke="#777" stroke-width="1"/><path d="M150.1 142.6l3.4 3.4M154.1 143.6v3.2h-3.2" fill="none" stroke="#777" stroke-width="1"/><path d="M264.70 79.90h5.00l-2.50 3.00z" fill="#555"/><path d="M307.70 79.90h5.00l-2.50 3.00z" fill="#555"/><path d="M332.4 76.8l2.4-2.8 2.4 2.8z" fill="#3e7cc2"/><path d="M354 74l2.4 2.8 2.4-2.8z" fill="#3e7cc2"/><path d="M232.80 111.10h5.00l-2.50 3.00z" fill="#666"/><path d="M255.500 105.500h12v12h-12z" fill="#fff" stroke="#666" stroke-width="1.100"/><path d="M261.500 105.500v12M255.500 111.500h12" fill="none" stroke="#666" stroke-width="1.100"/><path d="M275.40 111.10h5.00l-2.50 3.00z" fill="#666"/><path d="M305 105.600l5.500 5.500-5.500 4.600-5.500-4.600z" fill="#fff" stroke="#666" stroke-width="1"/><path d="M302.500 109.500v-4.200a1.500 1.500 0 0 1 3 0v4.200" fill="none" stroke="#666" stroke-width="0.900"/><path d="M310 108c2.300.5 3.400 2.600 2.900 5.200-.2.900-.6 1.600-1.100 2-.1-2-.8-3.300-2.300-4.300z" fill="#3e7cc2"/><path d="M318.90 111.10h5.00l-2.50 3.00z" fill="#666"/><path d="M352.80 111.10h5.00l-2.50 3.00z" fill="#666"/><path d="M355.5 146.0v-5.5h5.5" fill="none" stroke="#777" stroke-width="1"/><path d="M357.6 142.6l3.4 3.4M361.6 143.6v3.2h-3.2" fill="none" stroke="#777" stroke-width="1"/><path d="M375.0 73.2h13.8M375.0 76.5h13.8M375.0 79.8h13.8" stroke="#6a6a6a" stroke-width="1" fill="none"/><path d="M397.0 76.7h13.8M397.0 80.0h13.8M397.0 83.3h13.8" stroke="#6a6a6a" stroke-width="1" fill="none"/><path d="M418.8 82.2h13.8M418.8 85.5h13.8M418.8 88.8h13.8" stroke="#6a6a6a" stroke-width="1" fill="none"/><path d="M455.400 87.600l9.400-8.800M460.800 78.300l4.300-.1-.3 4.300" fill="none" stroke="#555" stroke-width="1.100"/><text x="0" y="0" font-size="10.500" fill="#444" font-family="Liberation Sans,sans-serif" transform="translate(452.300 84.800) rotate(-47)">ab</text><path d="M468.70 79.90h5.00l-2.50 3.00z" fill="#666"/><path d="M502.500 73.500h9.500v4h-9.500zM502.500 80.500h9.500v7h-9.500z" fill="#fff" stroke="#6a6a6a" stroke-width="1"/><path d="M504.400 75.500h11.200M504.400 82.700h6M504.400 84.700h6" stroke="#3e7cc2" stroke-width="1"/><path d="M515.600 75.500a2.200 2.200 0 0 1 2 2.600c-.3 2-2.200 3.400-5.400 3.600M514.200 79.700l-2.400 2.100 2.600 1.700" fill="none" stroke="#3e7cc2" stroke-width="1"/><path d="M375.0 107.5h13.8M375.0 110.5h9.9M375.0 113.5h13.8M375.0 116.5h9.9" stroke="#6a6a6a" stroke-width="1" fill="none"/><path d="M397.0 107.5h13.8M398.9 110.5h9.9M397.0 113.5h13.8M398.9 116.5h9.9" stroke="#6a6a6a" stroke-width="1" fill="none"/><path d="M419.0 107.5h13.8M422.9 110.5h9.9M419.0 113.5h13.8M422.9 116.5h9.9" stroke="#6a6a6a" stroke-width="1" fill="none"/><path d="M449 105.500h16M457.300 108.500h7.700M457.300 111.500h7.700M457.300 114.500h7.700M449 117.500h16" stroke="#6a6a6a" stroke-width="1" fill="none"/><path d="M450 111.300h5.800M452.600 108.500l-2.800 2.800 2.800 2.800" fill="none" stroke="#3e7cc2" stroke-width="1.500"/><path d="M471 105.500h16M479.300 108.500h7.700M479.300 111.500h7.700M479.300 114.500h7.700M471 117.500h16" stroke="#6a6a6a" stroke-width="1" fill="none"/><path d="M471.400 111.300h5.800M474.400 108.500l2.800 2.800-2.800 2.800" fill="none" stroke="#3e7cc2" stroke-width="1.500"/><path d="M502.500 104.500h14v14h-14z" fill="#fff" stroke="#6a6a6a" stroke-width="1"/><path d="M502.500 107.500h14M502.500 115.500h14M509.500 104.500v3M509.500 115.500v3" stroke="#6a6a6a" stroke-width="1" fill="none"/><path d="M504.400 111.500h10.200M506 109.800l-1.700 1.700 1.700 1.700M513 109.800l1.700 1.700-1.700 1.700" fill="none" stroke="#3e7cc2" stroke-width="1"/><path d="M615.90 111.10h5.00l-2.50 3.00z" fill="#666"/><path d="M619.5 146.0v-5.5h5.5" fill="none" stroke="#777" stroke-width="1"/><path d="M621.6 142.6l3.4 3.4M625.6 143.6v3.2h-3.2" fill="none" stroke="#777" stroke-width="1"/><path d="M755.50 79.90h5.00l-2.50 3.00z" fill="#555"/><path d="M659.80 111.10h5.00l-2.50 3.00z" fill="#666"/><path d="M725.600 108.400h6M728.200 105.800l-2.600 2.600 2.600 2.600" fill="none" stroke="#3e7cc2" stroke-width="1.400"/><path d="M747.200 115.600h6M750.600 113l2.600 2.600-2.600 2.600" fill="none" stroke="#3e7cc2" stroke-width="1.400"/><path d="M759.2 146.0v-5.5h5.5" fill="none" stroke="#777" stroke-width="1"/><path d="M761.3 142.6l3.4 3.4M765.3 143.6v3.2h-3.2" fill="none" stroke="#777" stroke-width="1"/><path d="M797.500 67.500h27v24h-27z" fill="#fff" stroke="#7d7d7d" stroke-width="1"/><path d="M797.500 73.500h27M797.500 79.500h27M797.500 85.500h27M804.500 67.500v24M817.500 67.500v24" stroke="#9a9a9a" stroke-width="1" fill="none"/><path d="M805 68h6v5h-6z" fill="#dc6141"/><path d="M805 74h11v5h-11z" fill="#4a86c5"/><path d="M805 80h9v5h-9z" fill="#dc6141"/><path d="M805 86h4v5h-4z" fill="#4a86c5"/><path d="M810.500 83.500h17v14h-17z" fill="#f1f1f1"/><path d="M811.700 84.700h14.800v12h-14.800z" fill="#fff" stroke="#666" stroke-width="1"/><text x="819.100" y="95" font-size="12.500" text-anchor="middle" fill="#333" font-family="Liberation Sans,sans-serif">≠</text><path d="M838.50 123.10h5.00l-2.50 3.00z" fill="#666"/><path d="M862.500 69.500h24v20h-24z" fill="#fff" stroke="#7d7d7d" stroke-width="1"/><path d="M868.500 74.500h18v15h-18z" fill="#bdd7ee"/><path d="M862.500 74.500h24M862.500 79.500h24M862.500 84.500h24M868.500 69.500v20M874.500 69.500v20M880.500 69.500v20" stroke="#9a9a9a" stroke-width="1" fill="none"/><path d="M890.900 74.400l.3 7.600-8.200 6.900-3.100-2.400z" fill="#808080" stroke="#f1f1f1" stroke-width="0.700"/><path d="M882.800 83.200l3 2.600" stroke="#f1f1f1" stroke-width="1"/><path d="M868.300 96.900c3.600-2 5-4.600 6.200-6.400 1.500-2.200 3.700-3 5.400-2.300 1.900.8 2.800 2.900 2 4.900-.9 2.300-3.300 3.800-6.400 3.800z" fill="#3e7cc2"/><path d="M877 90.300c1.200-.9 2.800-.8 3.700.2.800.9.800 2.200.2 3.300-.5-1.600-1.900-2.800-3.900-3.500z" fill="#fff"/><path d="M887.70 123.10h5.00l-2.50 3.00z" fill="#666"/><path d="M1441.60 77.20h5.60l-2.80 -3.20z" fill="#c2c2c2"/><path d="M1441.60 95.00h5.60l-2.80 3.20z" fill="#666"/><path d="M1441 113.300h7" stroke="#666" stroke-width="1.200"/><path d="M1441.60 115.80h5.60l-2.80 3.20z" fill="#666"/><path d="M1472.500 67.500h14v5h-14zM1479.500 67.500v5" fill="#fff" stroke="#6e6e6e" stroke-width="1.100"/><path d="M1483.500 75.500h14v5h-14z" fill="#c5d9ef" stroke="#6e6e6e" stroke-width="1.100"/><path d="M1490.500 75.500v5" stroke="#6e6e6e" stroke-width="1.100"/><path d="M1473.600 78.100h6.200M1476.400 75.100l-3 3 3 3" fill="none" stroke="#3e7cc2" stroke-width="1.700"/><path d="M1472.500 83.500h14v10h-14zM1479.500 83.500v10M1472.500 88.500h14" fill="#fff" stroke="#6e6e6e" stroke-width="1.100"/><path d="M1481.70 121.70h5.00l-2.50 3.00z" fill="#666"/><path d="M1513.500 67.500h14v5h-14zM1520.500 67.500v5" fill="#fff" stroke="#6e6e6e" stroke-width="1.100"/><path d="M1519.500 75.500h11.500v5h-11.500z" fill="#c5d9ef" stroke="#6e6e6e" stroke-width="1.100"/><path d="M1526.500 75.500v5" stroke="#6e6e6e" stroke-width="1.100"/><path d="M1513.500 84.500h14v10h-14zM1520.500 84.500v10M1513.500 89.500h14" fill="#fff" stroke="#6e6e6e" stroke-width="1.100"/><path d="M1527.600 85.600l15-12.800z" fill="none" stroke="#f1f1f1" stroke-width="4"/><path d="M1528.400 72.800l13.600 13M1542.200 73.200l-14.400 12.200" stroke="#d9593a" stroke-width="2.300" fill="none"/><path d="M1523.90 121.70h5.00l-2.50 3.00z" fill="#666"/><path d="M1555.500 72.500h27v20h-27z" fill="#fff" stroke="#6e6e6e" stroke-width="1.100"/><path d="M1556 77.500h26M1556 87.500h26M1562.500 73v19M1570.500 73v19M1577.500 73v19" stroke="#b9b9b9" stroke-width="1" fill="none"/><path d="M1563 78h7v9h-7z" fill="#4a86c5"/><path d="M1555.500 92.500v3.200l1 .9h5.400l2-2.400 1.400 2.400h6l3.400-4.100" fill="#fff" stroke="#6e6e6e" stroke-width="1"/><path d="M1555.600 66v5M1577.600 66v5M1557.600 68.500h18M1560.400 66l-2.700 2.500 2.700 2.500M1572.800 66l2.700 2.500-2.700 2.500" fill="none" stroke="#3e7cc2" stroke-width="1.200"/><path d="M1566.70 121.70h5.00l-2.50 3.00z" fill="#666"/><path d="M1617.100 68.600v-2.600h-12.300l7 6.400-7 6.500h12.300v-2.600" fill="none" stroke="#444" stroke-width="2" stroke-linejoin="miter"/><path d="M1681.70 71.30h5.00l-2.50 3.00z" fill="#666"/><path d="M1604.500 88.500h13v15h-13z" fill="#fff" stroke="#6e6e6e" stroke-width="1"/><path d="M1604 88h14v3.400h-14z" fill="#7a7a7a"/><path d="M1611 93.600v7M1607.800 97.500l3.200 3.200 3.200-3.200" fill="none" stroke="#2f6db5" stroke-width="1.800"/><path d="M1639.70 94.80h5.00l-2.50 3.00z" fill="#666"/><path d="M1604.400 119.600l8.200-7.400 4.200 4.400-8 7.400-2.400.1z" fill="#e8788d"/><path d="M1604.400 119.600l2 4.500 2.400-.1-2.600-3.300z" fill="#f3b3bf"/><path d="M1608.500 124.100h9.500" stroke="#555" stroke-width="1"/><path d="M1651.70 117.80h5.00l-2.50 3.00z" fill="#666"/><path d="M1710.400 75h17l-6.800 7.200h-3.400z" fill="#7f7f7f"/><path d="M1717.200 81.800v7.400h2.600v-7.400" fill="#fff" stroke="#7f7f7f" stroke-width="0.900"/><path d="M1724.70 123.10h5.00l-2.50 3.00z" fill="#666"/><circle cx="1759" cy="77.300" r="8.800" fill="#fff" stroke="#3e7cc2" stroke-width="2.100"/><path d="M1751.600 84.500l-7.600 7.600" stroke="#3e7cc2" stroke-width="3.300" stroke-linecap="round"/><path d="M1769.70 123.10h5.00l-2.50 3.00z" fill="#666"/><path d="M94.70 172.40h7.00l-3.50 3.60z" fill="#666"/><path d="M123 170h2v2h-2zM123 174h2v2h-2zM123 178h2v2h-2z" fill="#9a9a9a"/><path d="M152.800 170.300l10.400 9.800M163.200 170.300l-10.400 9.800" stroke="#bcbcbc" stroke-width="1.300" fill="none"/><path d="M188.400 175.800l4.400 4.200 7.600-9.600" stroke="#c2c2c2" stroke-width="2.200" fill="none"/><path d="M23.800 202.800v10.600h-11.600z" fill="#b7b7b7"/><path d="M163 500h5.500l-5.500 5.500z" fill="#0f7b0f"/><path d="M163 520h5.500l-5.500 5.500z" fill="#0f7b0f"/><path d="M163 540h5.500l-5.500 5.500z" fill="#0f7b0f"/><path d="M163 560h5.500l-5.500 5.500z" fill="#0f7b0f"/><path d="M163 580h5.500l-5.500 5.500z" fill="#0f7b0f"/></svg>
<div class="b" style="left:24.30px;top:435.20px;width:1844.20px;height:69.40px;border:4px solid #f3464c;box-sizing:border-box;"></div>
<div class="b" style="left:0.00px;top:0.00px;width:1890.00px;height:2.00px;background:#000;"></div>
<div class="b" style="left:0.00px;top:597.00px;width:1890.00px;height:2.00px;background:#000;"></div>
<div class="b" style="left:0.00px;top:0.00px;width:2.00px;height:599.00px;background:#000;"></div>
<div class="b" style="left:1888.00px;top:0.00px;width:2.00px;height:599.00px;background:#000;"></div>
</div>
</body></html>
